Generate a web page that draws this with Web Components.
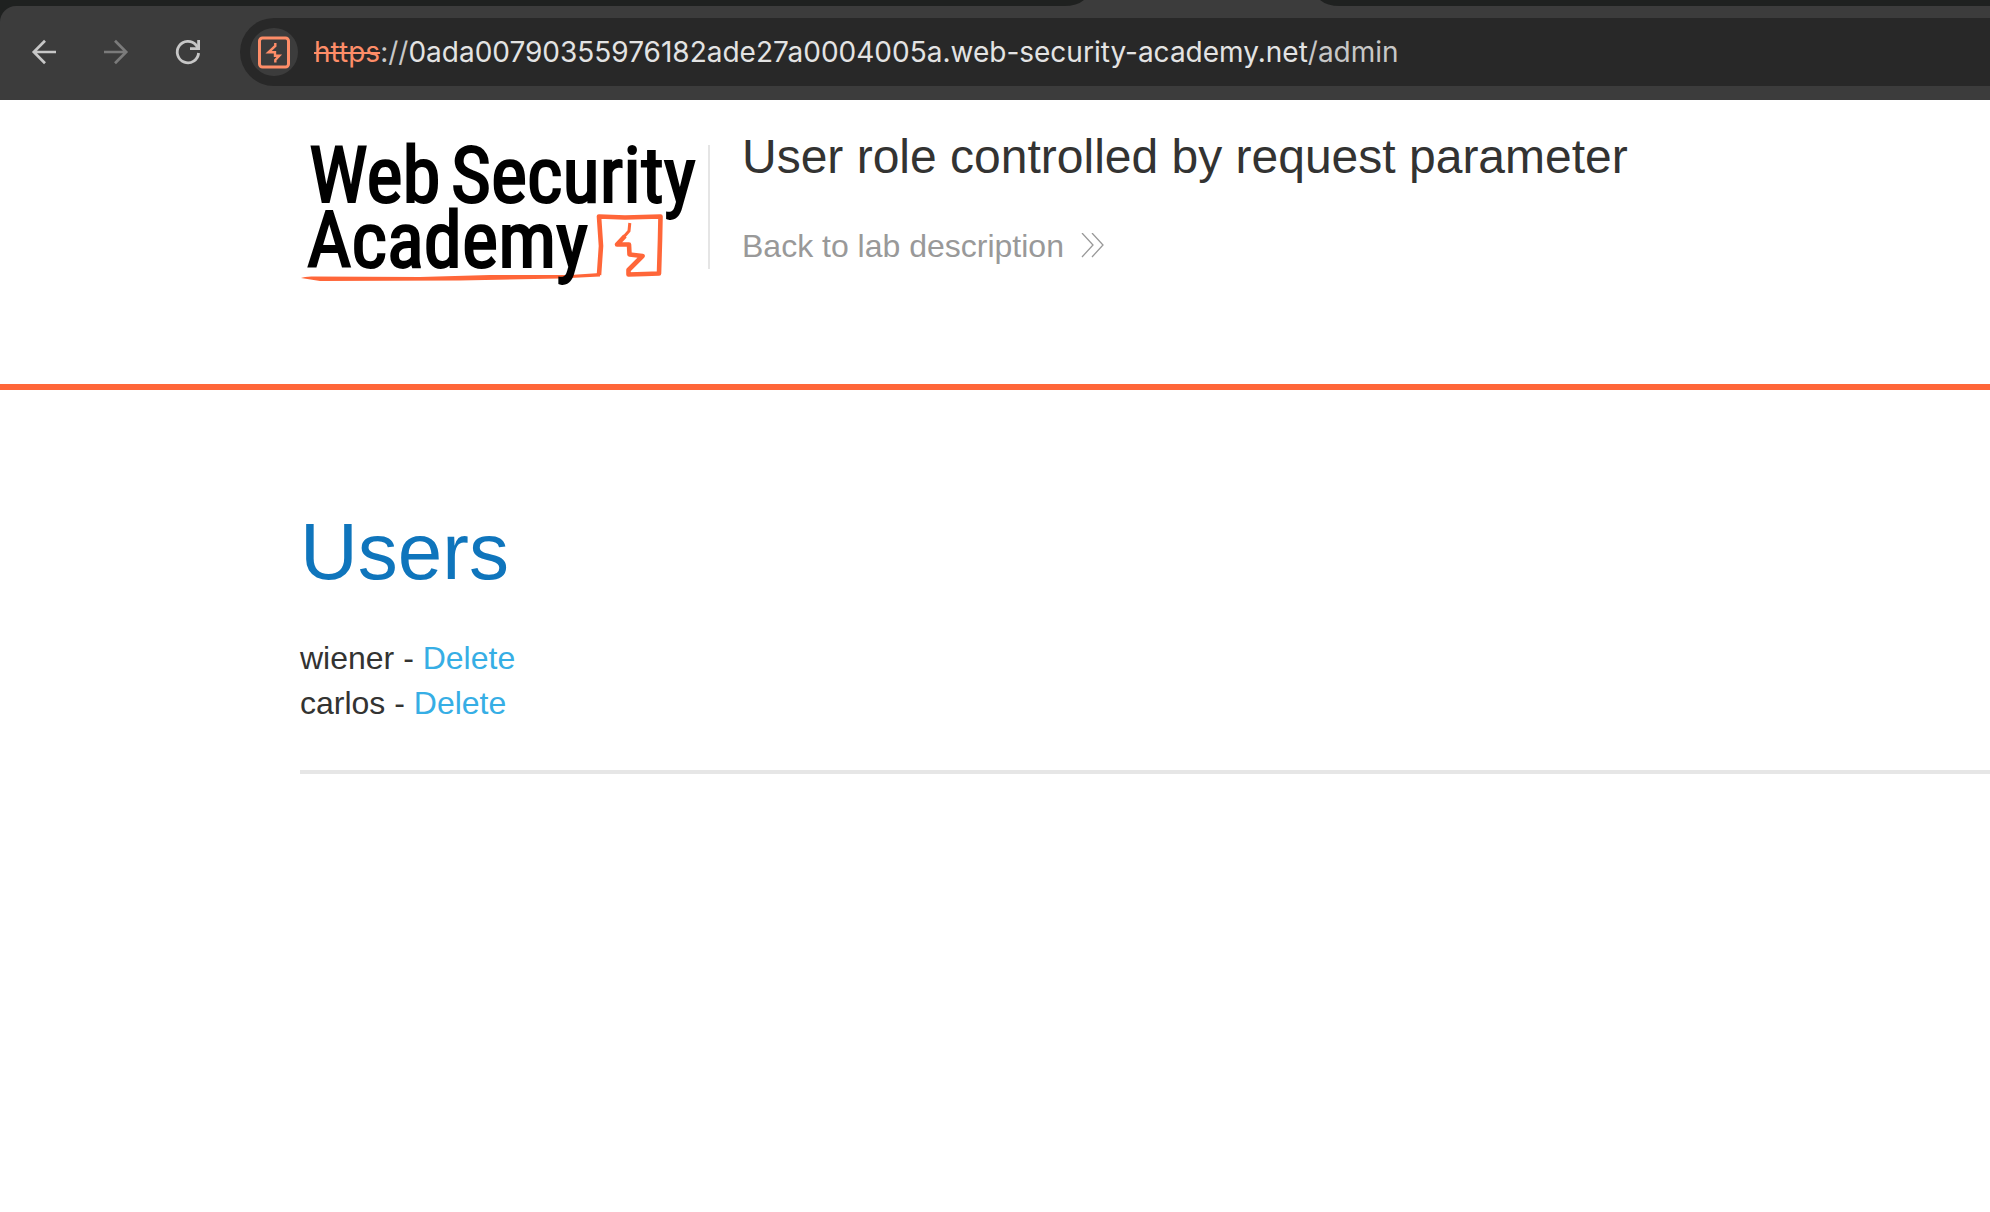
<!DOCTYPE html>
<html lang="en">
<head>
<meta charset="utf-8">
<title>User role controlled by request parameter</title>
<style>
  html, body { margin: 0; background: #fff; }
  body { font-family: "Liberation Sans", Arial, sans-serif; font-size: 32px; line-height: 45px; color: #333332; }
</style>
</head>
<body>
<browser-toolbar>
  <span slot="scheme">https</span><span slot="separator">://</span><span slot="host">0ada00790355976182ade27a0004005a.web-security-academy.net</span><span slot="path">/admin</span>
</browser-toolbar>
<lab-header href="#lab">
  <span slot="title">User role controlled by request parameter</span>
  <span slot="back">Back to lab description</span>
</lab-header>
<user-list heading="Users">
  <user-row name="wiener"></user-row>
  <user-row name="carlos"></user-row>
</user-list>

<script>
class BrowserToolbar extends HTMLElement {
  constructor() {
    super();
    this.attachShadow({ mode: "open" }).innerHTML = `
<style>
  :host { display: block; background: #1f2120; }
  .tabs { height: 6px; display: flex; background: #1f2120; overflow: hidden; }
  .tabs svg { display: block; margin-left: 1064px; flex: none; }
  .bar { display: flex; align-items: center; box-sizing: border-box; height: 94px; padding: 12px 0 14px 20px; background: #3c3c3c; border-top-left-radius: 16px; }
  .nav { display: flex; gap: 24px; margin-right: 28px; }
  button { border: 0; padding: 0; margin: 0; background: none; width: 48px; height: 48px; display: grid; place-items: center; color: #c7c7c7; }
  button:disabled { color: #7b7b7b; }
  .box { flex: 1; display: flex; align-items: center; gap: 16px; height: 68px; box-sizing: border-box; padding-left: 10px; border-radius: 34px 0 0 34px; background: #282828; }
  .chip { border-radius: 50%; background: #3c3c3c; }
  .url { font: 400 28px/36px Inter, sans-serif; color: #e3e3e3; white-space: nowrap; outline: 0; display: flex; }
  ::slotted([slot="scheme"]) { color: #fe8d68; text-decoration: line-through; text-decoration-thickness: 2px; }
  ::slotted([slot="separator"]), ::slotted([slot="path"]) { color: #c7c7c7; }
</style>
<div class="tabs"><svg width="276" height="6" viewBox="0 0 276 6"><path d="M0 6Q13 6 20 0H256Q263 6 276 6Z" fill="#3c3c3c"/></svg></div>
<div class="bar">
  <div class="nav">
    <button aria-label="Back"><svg width="48" height="48" viewBox="0 0 48 48" fill="none" stroke="currentColor" stroke-width="2.7"><path d="M36 24H14M25 12.8 13.8 24 25 35.2"/></svg></button>
    <button aria-label="Forward" disabled><svg width="48" height="48" viewBox="0 0 48 48" fill="none" stroke="currentColor" stroke-width="2.7"><path d="M12 24H34M23 12.8 34.2 24 23 35.2"/></svg></button>
    <button aria-label="Reload"><svg width="48" height="48" viewBox="0 0 48 48" fill="none" stroke="currentColor" stroke-width="2.8"><path d="M34.6 25A10.7 10.7 0 1 1 32 17L34 20"/><path d="M34.6 12V20.6H26"/></svg></button>
  </div>
  <div class="box">
    <button class="chip" aria-label="Site information"><svg width="48" height="48" viewBox="0 0 48 48" fill="none" stroke="#fe8d68"><rect x="9.5" y="10" width="29" height="29" rx="3" stroke-width="3"/><path d="M25.3 15V18L18.500 24.300H25V27.800H29.300L25.300 32V34.500" stroke-width="2.400"/></svg></button>
    <div class="url" role="textbox" aria-label="Address" tabindex="0"><slot name="scheme"></slot><slot name="separator"></slot><slot name="host"></slot><slot name="path"></slot></div>
  </div>
</div>`;
  }
}

class AcademyLogo extends HTMLElement {
  constructor() {
    super();
    this.attachShadow({ mode: "open" }).innerHTML = `
<style>
  :host { display: block; }
  svg { display: block; }
  text { font-family: "Roboto Condensed", Roboto, sans-serif; font-size: 77px; font-weight: 400; stroke: #000; stroke-width: 2; }
</style>
<svg width="408" height="162" viewBox="300 128 408 162" role="img" aria-label="Web Security Academy">
  <path d="M301 278Q305 276 315 276.500L420 277 490 275 570 275 600 273V276.500L560 278.500 460 280.500 320 281Z" fill="#ff6639"/>
  <g fill="none" stroke="#ff6639" stroke-linejoin="round">
    <path d="M599 275 601 246 599 216.500 625 217.500 660.500 216.500 660 240 659 273.500 645 274 628.500 274.500V270L642.500 256 629.500 254.500 629 244.500H617L625 236" stroke-width="4.600"/>
    <path d="M618 243.500 629 231 629.800 223" stroke-width="3"/>
  </g>
  <text x="309" y="202">Web</text><text x="451" y="202">Security</text>
  <text x="307" y="267">Academy</text>
</svg>`;
  }
}

class LabHeader extends HTMLElement {
  constructor() {
    super();
    this.attachShadow({ mode: "open" }).innerHTML = `
<style>
  :host { display: flex; box-sizing: border-box; min-height: 290px; padding: 28px 0 0 300px; border-bottom: 6px solid #ff6639; }
  academy-logo { flex: none; }
  .rule { width: 2px; height: 124px; margin: 17px 32px 0 0; background: #e5e5e5; }
  .info { display: flex; flex-direction: column; align-items: flex-start; gap: 42px; }
  h2 { margin: 0; font-weight: 400; font-size: 48px; line-height: 58px; }
  a { display: flex; align-items: center; gap: 16px; line-height: 36px; color: #999; text-decoration: none; }
</style>
<academy-logo></academy-logo>
<div class="rule"></div>
<div class="info">
  <h2><slot name="title"></slot></h2>
  <a><slot name="back"></slot><svg width="26" height="26" viewBox="0 0 26 26" fill="none" stroke="#999" stroke-width="1.3"><path d="M2 0 13 12 2 24M12 0 23 12 12 24"/></svg></a>
</div>`;
    this.shadowRoot.querySelector("a").href = this.getAttribute("href") || "#";
  }
}

class UserList extends HTMLElement {
  constructor() {
    super();
    this.attachShadow({ mode: "open" }).innerHTML = `
<style>
  :host { display: block; padding: 116px 0 0 300px; }
  h1 { margin: 0 0 38px; font-weight: 400; font-size: 80px; line-height: 92px; color: #0f75bc; }
  hr { margin: 44px 0 0; border: 0; height: 4px; background: #e6e6e6; }
</style>
<h1></h1><slot></slot><hr>`;
    this.shadowRoot.querySelector("h1").textContent = this.getAttribute("heading");
  }
}

class UserRow extends HTMLElement {
  constructor() {
    super();
    this.attachShadow({ mode: "open" }).innerHTML = `
<style>
  :host { display: block; }
  a { color: #36aee5; text-decoration: none; }
</style>
<span></span> <a href="#delete">Delete</a>`;
    this.shadowRoot.querySelector("span").textContent = this.getAttribute("name") + " -";
  }
}

customElements.define("browser-toolbar", BrowserToolbar);
customElements.define("academy-logo", AcademyLogo);
customElements.define("lab-header", LabHeader);
customElements.define("user-list", UserList);
customElements.define("user-row", UserRow);
</script>
</body>
</html>
